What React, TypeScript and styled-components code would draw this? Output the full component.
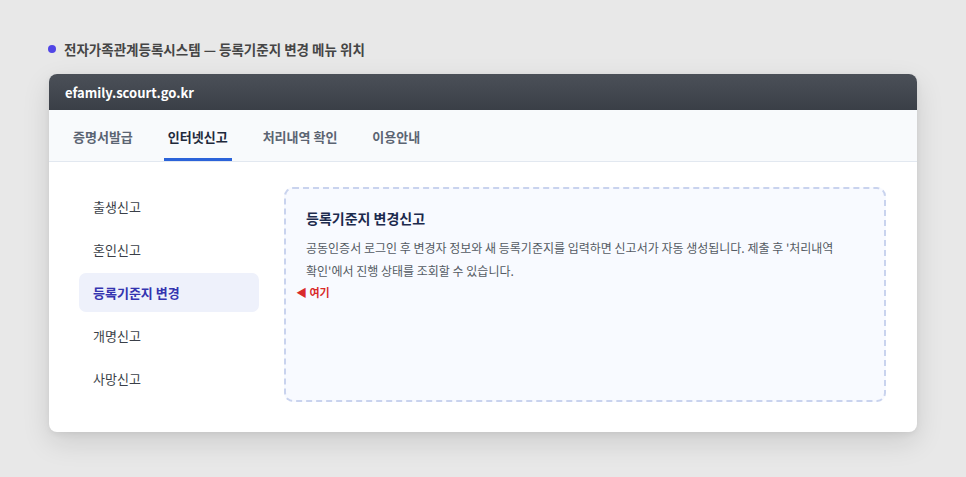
import React from "react";
import styled, { createGlobalStyle } from "styled-components";

const Global = createGlobalStyle`
  html, body { margin: 0; padding: 0; }
  body {
    background: #e8e8e8;
    font-family: "Noto Sans CJK KR", "Noto Sans", sans-serif;
    width: 966px;
    height: 477px;
    overflow: hidden;
  }
`;

const Page = styled.div`
  padding: 40px 49px 0 49px;
  display: flex;
  flex-direction: column;
`;

const Caption = styled.div`
  display: flex;
  align-items: center;
  gap: 8px;
  height: 18px;
  margin-left: -1px;
  font-size: 13.5px;
  font-weight: 700;
  color: #454545;
`;

const Dot = styled.span`
  width: 8px;
  height: 8px;
  border-radius: 50%;
  background: #5146e6;
  flex: none;
`;

const Card = styled.div`
  margin-top: 16px;
  width: 868px;
  background: #ffffff;
  border-radius: 8px;
  box-shadow: 0 10px 28px rgba(0, 0, 0, 0.12), 0 2px 6px rgba(0, 0, 0, 0.06);
  overflow: hidden;
`;

const TitleBar = styled.div`
  height: 36px;
  display: flex;
  align-items: center;
  padding-left: 16px;
  background: linear-gradient(#4b5058, #3a3f47);
  color: #ffffff;
  font-size: 13px;
  font-weight: 700;
`;

const Tabs = styled.nav`
  height: 51px;
  display: flex;
  align-items: stretch;
  gap: 27px;
  padding-left: 20px;
  background: #f8fafc;
  border-bottom: 1px solid #e2e8f0;
`;

const Tab = styled.div<{ $active?: boolean }>`
  display: flex;
  align-items: center;
  padding: 4px 4px 0 4px;
  font-size: 13px;
  font-weight: 700;
  color: ${(p) => (p.$active ? "#1e293b" : "#5b6472")};
  border-bottom: 3px solid ${(p) => (p.$active ? "#2b63d9" : "transparent")};
`;

const Body = styled.div`
  display: flex;
  gap: 25px;
  padding: 25px 31px 30px 30px;
`;

const Side = styled.ul`
  list-style: none;
  margin: 0;
  padding: 0;
  width: 180px;
  display: flex;
  flex-direction: column;
  gap: 4px;
`;

const SideItem = styled.li<{ $active?: boolean }>`
  height: 39px;
  display: flex;
  align-items: center;
  padding-left: 14px;
  border-radius: 7px;
  font-size: 13px;
  font-weight: ${(p) => (p.$active ? 700 : 400)};
  color: ${(p) => (p.$active ? "#3434b0" : "#3a3f48")};
  background: ${(p) => (p.$active ? "#eef1fb" : "transparent")};
`;

const Panel = styled.section`
  flex: 1;
  min-height: 215px;
  box-sizing: border-box;
  background: #f8faff;
  border: 2px dashed #c9d3ee;
  border-radius: 9px;
  padding: 18px 20px 20px 20px;
`;

const PanelTitle = styled.h2`
  margin: 0;
  font-size: 14px;
  font-weight: 700;
  color: #1c2a4d;
  line-height: 22px;
`;

const Desc = styled.p`
  margin: 7px 0 0 0;
  font-size: 12px;
  line-height: 23px;
  color: #545a63;
  word-break: keep-all;
`;

const Here = styled.div`
  margin: 0 0 0 -10px;
  font-size: 11px;
  font-weight: 700;
  color: #d92b2b;
  line-height: 20px;
`;

const tabs = ["증명서발급", "인터넷신고", "처리내역 확인", "이용안내"];
const side = ["출생신고", "혼인신고", "등록기준지 변경", "개명신고", "사망신고"];

export default function App() {
  return (
    <>
      <Global />
      <Page>
        <Caption>
          <Dot />
          전자가족관계등록시스템 — 등록기준지 변경 메뉴 위치
        </Caption>
        <Card>
          <TitleBar>efamily.scourt.go.kr</TitleBar>
          <Tabs>
            {tabs.map((t) => (
              <Tab key={t} $active={t === "인터넷신고"}>
                {t}
              </Tab>
            ))}
          </Tabs>
          <Body>
            <Side>
              {side.map((s) => (
                <SideItem key={s} $active={s === "등록기준지 변경"}>
                  {s}
                </SideItem>
              ))}
            </Side>
            <Panel>
              <PanelTitle>등록기준지 변경신고</PanelTitle>
              <Desc>
                공동인증서 로그인 후 변경자 정보와 새 등록기준지를 입력하면 신고서가 자동 생성됩니다. 제출 후 '처리내역
                확인'에서 진행 상태를 조회할 수 있습니다.
              </Desc>
              <Here>◀ 여기</Here>
            </Panel>
          </Body>
        </Card>
      </Page>
    </>
  );
}
